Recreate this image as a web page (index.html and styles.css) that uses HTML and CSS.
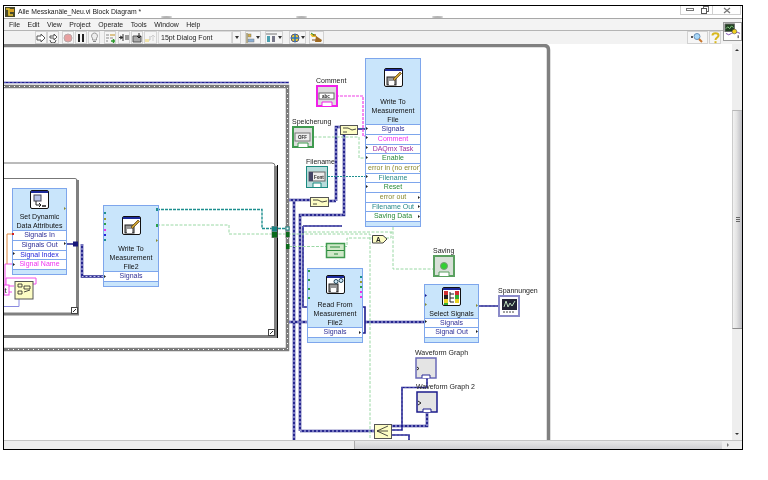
FILE: index.html
```html
<!DOCTYPE html>
<html lang="de">
<head>
<meta charset="utf-8">
<title>Alle Messkanäle_Neu.vi Block Diagram *</title>
<link rel="stylesheet" href="styles.css">
</head>
<body>
<div class="window">
  <header class="titlebar">
    <svg class="app-icon" width="10" height="10" viewBox="0 0 10 10"><rect width="10" height="10" fill="#4a4a2a"/><path d="M1 2h3v6h4" stroke="#f0c830" stroke-width="1.6" fill="none"/><path d="M5 2h4v3H5z" fill="#d8a020"/></svg>
    <span class="title-text">Alle Messkanäle_Neu.vi Block Diagram *</span>
    <span class="smudge s1"></span><span class="smudge s2"></span><span class="smudge s3"></span>
    <div class="win-btns">
      <span class="win-btn wb-min"><svg width="8" height="4"><rect x=".5" y=".5" width="7" height="2" fill="#fff" stroke="#777"/></svg></span>
      <span class="win-btn wb-max"><svg width="8" height="8"><rect x="2.5" y=".5" width="5" height="5" fill="none" stroke="#666"/><rect x=".5" y="2.5" width="5" height="5" fill="#fff" stroke="#555"/></svg></span>
      <span class="win-btn wb-close"><svg width="8" height="7"><path d="M1 1l6 5M7 1L1 6" stroke="#777" stroke-width="1.2"/></svg></span>
    </div>
  </header>
  <nav class="menubar">
    <span>File</span><span>Edit</span><span>View</span><span>Project</span><span>Operate</span><span>Tools</span><span>Window</span><span>Help</span>
  </nav>
  <div class="toolbar">
    <span class="tb"><svg width="10" height="10"><path d="M1 3h4V1l4 4-4 4V7H1z" fill="#fff" stroke="#555"/></svg></span>
    <span class="tb"><svg width="10" height="10"><path d="M2 3h4V1l3 3-3 3V5H2z" fill="#fff" stroke="#555"/><path d="M8 7a3 3 0 0 1-6 0" fill="none" stroke="#555"/></svg></span>
    <span class="tb m3"><svg width="10" height="10"><circle cx="5" cy="5" r="4" fill="#e8a0a0" stroke="#b8a8a8"/></svg></span>
    <span class="tb m1"><svg width="8" height="8"><path d="M1 0h2v8H1zM5 0h2v8H5z" fill="#222"/></svg></span>
    <span class="tb m1"><svg width="9" height="11"><path d="M4.5 1a3 3 0 0 1 2 5.2V8h-4V6.200a3 3 0 0 1 2-5.200z" fill="#eee" stroke="#999"/><path d="M3 9.500h3" stroke="#888"/></svg></span>
    <span class="tb m4"><svg width="11" height="10"><path d="M1 2h3M1 5h3M1 8h2" stroke="#888"/><path d="M5 2h5" stroke="#c09020"/><path d="M5 5h3" stroke="#888"/><path d="M6 8h5M8.500 6v4" stroke="#2a9a2a" stroke-width="1.500"/></svg></span>
    <span class="tb m2"><svg width="11" height="9"><path d="M4 1v7M0 4.500h4M1 3l3 1.500L1 6" stroke="#333" fill="none"/><path d="M6 2h5v5H6z" fill="#999"/></svg></span>
    <span class="tb m1"><svg width="11" height="10"><path d="M1 3h8v6H1z" fill="#aaa" stroke="#555"/><path d="M7 0v5M5 3l2 2 2-2" stroke="#222" fill="none"/></svg></span>
    <span class="tb tb-wide tb-off m1"><svg width="11" height="10"><path d="M0 7h5V3" stroke="#bbb" fill="none"/><path d="M8 8V2M6 4l2-2 2 2" stroke="#ccc" fill="none"/><rect y="6" width="4" height="3" fill="#f2e3a0"/></svg></span>
    <span class="font-select m1">15pt Dialog Font</span>
    <span class="tb tb-drop"><i class="caret"></i></span>
    <span class="tb tb-align m4"><svg width="9" height="10"><path d="M1 0v10" stroke="#7a6a2a"/><rect x="2" y="1" width="3" height="3" fill="#d8b040" stroke="#777" stroke-width=".5"/><rect x="2" y="6" width="6" height="3" fill="#8ab0d8" stroke="#777" stroke-width=".5"/></svg><i class="caret"></i></span>
    <span class="tb tb-dist m4"><svg width="11" height="10"><path d="M0 1h11" stroke="#777"/><rect x="1" y="3" width="3" height="6" fill="#4aa0b0"/><rect x="6" y="3" width="3" height="6" fill="#778"/></svg><i class="caret"></i></span>
    <span class="tb tb-reorder m6"><svg width="11" height="10"><circle cx="5" cy="5" r="4" fill="#e8c830" stroke="#557"/><path d="M5 1v8M1 5h8" stroke="#2a70c0" stroke-width="1.500"/></svg><i class="caret"></i></span>
    <span class="tb tb-clean m3"><svg width="14" height="11"><path d="M0 2h5l2 3h-5z" fill="#e8c030"/><path d="M3 3h3M2 8h8" stroke="#7a4a1a"/><path d="M6 4l6 4-1 2H5z" fill="#a06a20"/><path d="M1 1l3 2" stroke="#2a8a2a"/></svg></span>
    <span class="tb tb-search"><svg width="13" height="11"><path d="M0 5h2" stroke="#222" stroke-width="1.500"/><circle cx="6" cy="4.500" r="3" fill="#a8d8f8" stroke="#6a90b8"/><path d="M8 7l3 3" stroke="#c87830" stroke-width="2"/></svg></span>
    <span class="tb tb-help m1"><svg width="9" height="12"><path d="M1.500 3.500C1.500.5 7.500.5 7.500 3.500c0 2-3 2-3 4.500" fill="none" stroke="#d8b820" stroke-width="2"/><rect x="3.500" y="9.200" width="2" height="2" fill="#d8b820"/></svg></span>
  </div>
  <div class="vi-icon">
    <svg width="17" height="17" viewBox="0 0 18 18"><rect x="1" y="1" width="10" height="8" fill="#1f3f1f" stroke="#666"/><path d="M2 6l2-2 2 2 2-3 2 2" stroke="#8ad08a" fill="none"/><path d="M2 11q3 3 6 0t9 0" stroke="#7a4ab0" fill="none"/><circle cx="11" cy="9" r="2.500" fill="#f0d020" stroke="#333" stroke-width=".5"/><path d="M15 13v3" stroke="#222"/></svg>
  </div>
  <div class="workspace">
    <main class="canvas">
      <svg class="layer" width="728" height="396" viewBox="4 44 728 396">
        <defs>
          <path id="dyn-a" d="M82 244V276.500H103M294 200V440M289 200H310M300 431V215H344V134M300 431H374M336 201V127H340M328 201H336M289 322H307M365 322H424M391 426H427V413"/>
          <path id="dyn-b" d="M303 226V307H307M303 226H342M391 430H402V387.500H427V378M391 435H409V440M479 306H498M4 82.500H289"/>
        </defs>
        <!-- structure frames -->
        <path class="frame-main" d="M4 45.500H544q4.500 0 4.500 4.500V440"/>
        <path class="frame-dot" d="M4 86.500H287.500V349.500H4"/>
        <path class="frame-dot-mark" d="M4 86.500H287.500V349.500H4"/>
        <path class="frame-thin" d="M4 163H272q3 0 3 3"/>
        <path class="frame-mid" d="M275.500 166V336.500H4"/>
        <path class="frame-black" d="M277.500 165V338"/>
        <rect class="frame-corner" x="268.500" y="329.500" width="6" height="6"/>
        <path class="corner-mark" d="M270 334l3-3"/>
        <path class="frame-thin" d="M4 178.500H75q2 0 2 2"/>
        <path class="frame-mid" d="M77.500 180V314H4"/>
        <rect class="frame-corner" x="71.500" y="307.500" width="6" height="6"/>
        <path class="corner-mark" d="M73 312l3-3"/>
        <!-- signal wires -->
        <use href="#dyn-a" class="wire-dyn"/>
        <use href="#dyn-a" class="wire-dyn-mark"/>
        <use href="#dyn-b" class="wire-navy"/>
        <use href="#dyn-b" class="wire-navy-mark"/>
        <path class="wire-navy" d="M66 244H74M357 129H365M362 307H365V333H362"/>
        <path class="wire-teal" d="M157 209.500H262V228.500H287"/>
        <path class="wire-teal-dash" d="M328 176.500H365"/>
        <path class="wire-green" d="M157 225H229V234H370V438M289 246.500H326M344 246.500H347V238H372M386 238H391V232M304 232H393M393 227V269H433M314 137H359V158H365"/>
        <path class="wire-pink" d="M336 96H363V136H365"/>
        <path class="wire-pink-solid" d="M5 285V264H12M8 286H14M33 284H36V278H6V285M8 292H12"/>
        <path class="wire-orange" d="M7 264V234H12"/>
        <path class="wire-lav" d="M4 306.500H19V299"/>
        <!-- tunnels -->
        <rect class="tunnel-bg" x="271.500" y="226" width="6" height="12"/>
        <rect class="tunnel-bg" x="285.500" y="226" width="4" height="12"/>
        <rect class="t-teal" x="272" y="226.500" width="5" height="5"/>
        <rect class="t-green" x="272" y="232" width="5" height="5.500"/>
        <rect class="t-teal-open" x="286" y="227" width="3" height="3"/>
        <rect class="t-green" x="286" y="232" width="3.500" height="5"/>
        <rect class="t-green" x="286" y="244" width="3.500" height="5"/>
        <rect class="t-navy" x="73" y="241.500" width="5" height="5"/>
      </svg>

      <article class="node n-write-main">
        <div class="head">
          <svg class="vi" viewBox="0 0 19 19"><rect x=".5" y=".5" width="18" height="18" rx="1.500" fill="#fff" stroke="#111"/><rect x="1" y="1" width="17" height="2" fill="#1c2a9a"/><rect x="3" y="9" width="9" height="8" fill="#999" stroke="#222"/><rect x="5" y="13" width="5" height="4" fill="#fff"/><path d="M9 11l7-7 1.500 1.500-7 7z" fill="#c8a030" stroke="#5a3a10" stroke-width=".7"/></svg>
          <div class="name">Write To<br>Measurement<br>File</div>
        </div>
        <div class="row c-sig">Signals</div>
        <div class="row c-pink">Comment</div>
        <div class="row c-purple">DAQmx Task</div>
        <div class="row c-green">Enable</div>
        <div class="row c-olive clip">error in (no error)</div>
        <div class="row c-teal">Filename</div>
        <div class="row c-green">Reset</div>
        <div class="row c-olive">error out</div>
        <div class="row c-teal">Filename Out</div>
        <div class="row c-green">Saving Data</div>
        <div class="foot"></div>
      </article>

      <article class="node n-write2">
        <div class="head">
          <svg class="vi" viewBox="0 0 19 19"><rect x=".5" y=".5" width="18" height="18" rx="1.500" fill="#fff" stroke="#111"/><rect x="1" y="1" width="17" height="2" fill="#1c2a9a"/><rect x="3" y="9" width="9" height="8" fill="#999" stroke="#222"/><rect x="5" y="13" width="5" height="4" fill="#fff"/><path d="M9 11l7-7 1.500 1.500-7 7z" fill="#c8a030" stroke="#5a3a10" stroke-width=".7"/></svg>
          <div class="name">Write To<br>Measurement<br>File2</div>
        </div>
        <div class="row c-sig">Signals</div>
        <div class="foot"></div>
      </article>

      <article class="node n-setdyn">
        <div class="head">
          <svg class="vi" viewBox="0 0 19 19"><rect x=".5" y=".5" width="18" height="18" rx="1.500" fill="#fff" stroke="#111"/><rect x="1" y="1" width="17" height="2" fill="#1c2a9a"/><rect x="4" y="5" width="7" height="6" fill="#b8c4e8" stroke="#445"/><path d="M6 11v4h5M9 13l2 2-2 2" fill="none" stroke="#222"/><path d="M12 16h4" stroke="#555" stroke-width="2"/></svg>
          <div class="name">Set Dynamic<br>Data Attributes</div>
        </div>
        <div class="row c-sig">Signals In</div>
        <div class="row c-sig">Signals Out</div>
        <div class="row c-blue">Signal Index</div>
        <div class="row c-pink">Signal Name</div>
        <div class="foot"></div>
      </article>

      <article class="node n-read">
        <div class="head">
          <svg class="vi" viewBox="0 0 19 19"><rect x=".5" y=".5" width="18" height="18" rx="1.500" fill="#fff" stroke="#111"/><rect x="1" y="1" width="17" height="2" fill="#1c2a9a"/><rect x="3" y="9" width="9" height="8" fill="#999" stroke="#222"/><rect x="5" y="13" width="5" height="4" fill="#fff"/><circle cx="10" cy="6.500" r="2" fill="#cfe8f8" stroke="#245"/><circle cx="15" cy="5.500" r="2" fill="#cfe8f8" stroke="#245"/></svg>
          <div class="name">Read From<br>Measurement<br>File2</div>
        </div>
        <div class="row c-sig">Signals</div>
        <div class="foot"></div>
      </article>

      <article class="node n-select">
        <div class="head">
          <svg class="vi" viewBox="0 0 19 19"><rect x=".5" y=".5" width="18" height="18" rx="1.500" fill="#fff" stroke="#111"/><rect x="1" y="1" width="17" height="2" fill="#1c2a9a"/><path d="M2 4h4v4H2z" fill="#d03030"/><path d="M2 8h4v4H2z" fill="#222"/><path d="M2 12h4v4H2z" fill="#e8d020"/><path d="M2 16h4v2H2z" fill="#30b030"/><path d="M13 4h4v4h-4z" fill="#d03030"/><path d="M13 8h4v4h-4z" fill="#30b030"/><path d="M13 12h4v4h-4z" fill="#e8d020"/><path d="M8 5v10M8 7h4M8 11h4M8 15h4" stroke="#222" fill="none"/></svg>
          <div class="name">Select Signals</div>
        </div>
        <div class="row c-sig">Signals</div>
        <div class="row c-sig">Signal Out</div>
        <div class="foot"></div>
      </article>

      <figure class="term t-comment">
        <figcaption>Comment</figcaption>
        <svg class="ctl" viewBox="0 0 22 22"><rect x=".5" y=".5" width="21" height="21" fill="#fff" stroke="#f020e8"/><rect x="1.500" y="1.500" width="19" height="19" fill="#ddd" stroke="#f020e8"/><rect x="3" y="8" width="15" height="6" fill="#fff" stroke="#666"/><text class="ctl-text" x="6" y="13">abc</text><path d="M6 21v-4h10v4" fill="#fff" stroke="#f020e8"/></svg>
      </figure>
      <figure class="term t-speicher">
        <figcaption>Speicherung</figcaption>
        <svg class="ctl" viewBox="0 0 22 22"><rect x=".5" y=".5" width="21" height="21" fill="#fff" stroke="#3f9a4f"/><rect x="1.500" y="1.500" width="19" height="19" fill="#ddd" stroke="#3f9a4f"/><rect x="3" y="7" width="15" height="8" fill="#eee" stroke="#777"/><text class="ctl-text" x="6" y="13">OFF</text><path d="M6 21v-4h10v4" fill="#fff" stroke="#3f9a4f"/></svg>
      </figure>
      <figure class="term t-filename">
        <figcaption>Filename</figcaption>
        <svg class="ctl" viewBox="0 0 22 22"><rect x=".5" y=".5" width="21" height="21" fill="#b8dcdc" stroke="#1b8a80"/><rect x="3" y="6" width="16" height="9" fill="#eee" stroke="#666"/><rect x="3" y="6" width="4" height="9" fill="#446"/><text class="ctl-text" x="8" y="12.500">Font</text><path d="M7 21v-4h8v4" fill="#fff" stroke="#1b8a80"/></svg>
      </figure>
      <figure class="term t-saving">
        <figcaption>Saving</figcaption>
        <svg class="ctl" viewBox="0 0 22 22"><rect x="1" y="1" width="20" height="20" fill="#d8e0d8" stroke="#5aa060" stroke-width="2"/><circle cx="11" cy="11" r="3.500" fill="#30d030" stroke="#7a9a7a"/><path d="M6 21v-4h10v4" fill="#fff" stroke="#5aa060"/></svg>
      </figure>
      <figure class="term t-span">
        <figcaption>Spannungen</figcaption>
        <svg class="ctl" viewBox="0 0 22 22"><rect x="1" y="1" width="20" height="20" fill="#fff" stroke="#8a8ac8" stroke-width="2"/><rect x="4" y="4" width="15" height="11" fill="#223"/><path d="M6 12l2-6 2 6 2-4 2 3 3-5" stroke="#bdb" fill="none"/><path d="M5 17h12" stroke="#444" stroke-dasharray="2 1"/></svg>
      </figure>
      <figure class="term t-wave1">
        <figcaption>Waveform Graph</figcaption>
        <svg class="ctl" viewBox="0 0 22 22"><rect x="1" y="1" width="20" height="20" fill="#e4e4e4" stroke="#6a6ab8" stroke-width="1.500"/><path d="M7 21v-3h8v3" fill="#fff" stroke="#2a2a96"/><path d="M2 10l2 1.500-2 1.500" fill="none" stroke="#222"/></svg>
      </figure>
      <figure class="term t-wave2">
        <figcaption>Waveform Graph 2</figcaption>
        <svg class="ctl" viewBox="0 0 22 22"><rect x="1" y="1" width="20" height="20" fill="#e4e4e4" stroke="#1c1c8c" stroke-width="1.500"/><path d="M7 21v-3h8v3" fill="#fff" stroke="#1c1c8c"/><path d="M2 10l3 2-3 2" fill="none" stroke="#222"/></svg>
      </figure>

      <svg class="layer" width="728" height="396" viewBox="4 44 728 396">
        <!-- terminals on the express nodes -->
        <path class="dot-k" d="M366 127l2 1.500-2 1.500zM366 136l2 1.500-2 1.500zM366 146l2 1.500-2 1.500zM366 156l2 1.500-2 1.500zM366 175l2 1.500-2 1.500zM366 185l2 1.500-2 1.500zM418 196l2 1.500-2 1.500zM418 205l2 1.500-2 1.500zM418 215l2 1.500-2 1.500zM104 275l2 1.500-2 1.500zM64 242l2 1.500-2 1.500zM13 252l2 1.500-2 1.500zM13 263l2 1.500-2 1.500zM359 331l2 1.500-2 1.500zM425 320l2 1.500-2 1.500zM476 330l2 1.500-2 1.500z"/>
        <rect class="dot-r" x="12" y="233" width="2" height="2"/>
        <path class="dot-o" d="M64 207l2 1.500-2 1.500zM476 304l2 1.500-2 1.500zM425 303l2 1.500-2 1.500zM156 239l2 1.500-2 1.500z"/>
        <path class="dot-navy" d="M425 294l2 1.500-2 1.500z"/>
        <g>
          <rect class="d-teal" x="104" y="212" width="2" height="2"/><rect class="d-olive" x="104" y="218" width="2" height="2"/><rect class="d-green" x="104" y="223" width="2" height="2"/><rect class="d-pink" x="104" y="229" width="2" height="2"/><rect class="d-blue" x="104" y="234" width="2" height="2"/><rect class="d-teal" x="104" y="239" width="2" height="2"/>
          <rect class="d-teal" x="156" y="208" width="2" height="3"/><rect class="d-green" x="156" y="224" width="2" height="3"/>
          <rect class="d-green" x="308" y="270" width="2" height="2"/><rect class="d-green" x="308" y="279" width="2" height="2"/><rect class="d-green" x="308" y="288" width="2" height="2"/><rect class="d-green" x="308" y="297" width="2" height="2"/>
          <rect class="d-teal" x="360" y="276" width="2" height="2"/><rect class="d-olive" x="360" y="281" width="2" height="2"/><rect class="d-green" x="360" y="286" width="2" height="2"/><rect class="d-pink" x="360" y="291" width="2" height="2"/><rect class="d-pink" x="360" y="296" width="2" height="2"/>
        </g>
        <!-- merge and select primitives -->
        <g class="prim">
          <rect x="340.500" y="125.500" width="17" height="9"/><path d="M343 128l5 0 4 2 4-1M343 132l4 0"/>
          <rect x="310.500" y="197.500" width="18" height="9"/><path d="M313 200l5 0 4 2 5-1M313 204l4 0"/>
          <rect x="374.500" y="424.500" width="17" height="14"/><path d="M377 431l11-5M377 431l11 0M377 431l11 5"/>
          <rect x="15" y="281.500" width="18" height="17.500"/><path d="M18 284h4v3h-4zM24 286h6v3h-6zM18 291h4v3h-4zM24 292l6-2"/>
        </g>
        <rect class="pink-const" x="4" y="285" width="5" height="10"/>
        <text class="pink-t" x="4.500" y="293">t</text>
        <path class="a-node" d="M372.500 235.500H383L387 239L383 243H372.500z"/>
        <text class="a-text" x="376" y="241.500">A</text>
        <g class="const-g">
          <rect x="326.500" y="243.500" width="18" height="14"/>
          <path d="M327 250.500H344M330 247h10M334 254h4"/>
        </g>
      </svg>
    </main>
    <aside class="vscroll">
      <span class="arrow-up"></span>
      <span class="v-thumb"><i></i><i></i><i></i></span>
      <span class="arrow-down"></span>
    </aside>
  </div>
  <footer class="hscroll">
    <span class="h-track"></span>
    <span class="h-thumb"></span>
    <span class="h-end"><i class="arrow-right"></i></span>
  </footer>
</div>
</body>
</html>
```
FILE: styles.css
```css
* { box-sizing: border-box; }
html, body { margin: 0; padding: 0; background: #fff; }
body { width: 768px; height: 480px; overflow: hidden; font-family: "Liberation Sans", Arial, sans-serif; color: #222; }

.window {
  position: relative;
  margin: 5px 0 0 3px;
  width: 740px;
  height: 445px;
  border: 1px solid #000;
  display: flex;
  flex-direction: column;
  filter: blur(.3px);
}

.titlebar {
  position: relative;
  height: 13px;
  flex: none;
  display: flex;
  align-items: center;
  gap: 3px;
  padding-left: 1px;
  background: #fff;
  border-bottom: 1px solid #a8a8a8;
}
.app-icon { flex: none; }
.title-text { font-size: 6.800px; color: #222; line-height: 12px; }
.smudge { position: absolute; top: 10px; width: 11px; height: 2px; background: #b4b4b4; border-radius: 50%; }
.s1 { left: 157px; }
.s2 { left: 292px; }
.s3 { left: 428px; }
.win-btns { position: absolute; right: 1px; top: 0; display: flex; height: 9px; border: 1px solid #cfcfcf; border-top: 0; }
.win-btn { display: flex; align-items: center; justify-content: center; }
.wb-min { width: 17px; }
.wb-max { width: 15px; border-right: 1px solid #cfcfcf; }
.wb-close { width: 27px; }

.menubar {
  height: 12px;
  flex: none;
  display: flex;
  gap: 7.500px;
  align-items: center;
  padding-left: 5px;
  font-size: 6.900px;
  background: #f3f3f3;
  border-bottom: 1px solid #b4b4b4;
  color: #222;
}

.toolbar {
  height: 13px;
  flex: none;
  display: flex;
  align-items: flex-start;
  padding: 0 21px 0 31px;
  background: #f2f2f2;
}
.tb {
  width: 12px;
  height: 13px;
  flex: none;
  display: flex;
  align-items: center;
  justify-content: center;
  gap: 1px;
  border: 1px solid #d2d2d2;
  background: #f6f6f6;
}
.tb-off { opacity: .9; }
.tb-wide { width: 13px; }
.tb-drop { width: 9px; }
.tb-align { width: 16px; }
.tb-dist { width: 18px; }
.tb-reorder { width: 17px; }
.tb-clean { width: 15px; }
.tb-search { width: 21px; margin-left: auto; }
.tb-help { width: 12px; }
.m1 { margin-left: 1px; }
.m2 { margin-left: 2px; }
.m3 { margin-left: 3px; }
.m4 { margin-left: 4px; }
.m6 { margin-left: 6px; }
.caret { width: 0; height: 0; border: 2px solid transparent; border-top: 3px solid #333; border-bottom: 0; flex: none; }
.font-select {
  width: 74px;
  height: 13px;
  flex: none;
  display: flex;
  align-items: center;
  padding-left: 2px;
  font-size: 7px;
  color: #222;
  background: #f6f6f6;
  border: 1px solid #dadada;
}

.vi-icon {
  position: absolute;
  right: 0;
  top: 16px;
  width: 19px;
  height: 19px;
  background: #fff;
  border: 1px solid #999;
  line-height: 0;
}

.workspace { flex: 1; min-height: 0; display: flex; }
.canvas { position: relative; flex: 1; min-width: 0; overflow: hidden; background: #fff; }
.layer { position: absolute; left: 0; top: 0; pointer-events: none; fill: none; }

/* structure frames */
.frame-main { stroke: #808080; stroke-width: 3.500; fill: none; }
.frame-dot { stroke: #7c7c7c; stroke-width: 3.500; fill: none; }
.frame-dot-mark { stroke: #fff; stroke-width: 1; stroke-dasharray: 1 4; fill: none; }
.frame-thin { stroke: #777; stroke-width: 1; fill: none; }
.frame-mid { stroke: #808080; stroke-width: 3; fill: none; }
.frame-black { stroke: #000; stroke-width: 1; fill: none; }
.frame-corner { fill: #fff; stroke: #444; }
.corner-mark { stroke: #333; fill: none; }

/* wires */
.wire-dyn { stroke: #27278f; stroke-width: 2.600; fill: none; }
.wire-dyn-mark { stroke: #c8c8f2; stroke-width: 1; stroke-dasharray: 2 2; fill: none; }
.wire-navy { stroke: #1c1c8c; stroke-width: 1.600; fill: none; }
.wire-navy-mark { stroke: #8f8fdc; stroke-width: .5; stroke-dasharray: 2 2; fill: none; }
.wire-teal { stroke: #1f8f8f; stroke-width: 1.400; stroke-dasharray: 3 1; fill: none; }
.wire-teal-dash { stroke: #1f8f8f; stroke-width: 1.200; stroke-dasharray: 2 1; fill: none; }
.wire-green { stroke: #9ad8a4; stroke-width: 1; stroke-dasharray: 3 1.500; fill: none; }
.wire-pink { stroke: #ef3fe6; stroke-width: 1.200; stroke-dasharray: 3 1; fill: none; }
.wire-pink-solid { stroke: #f050e8; stroke-width: 1; fill: none; }
.wire-orange { stroke: #e08a40; stroke-width: 1; fill: none; }
.wire-lav { stroke: #8a8ae0; stroke-width: 1; fill: none; }
.tunnel-bg { fill: #8a8a8a; }
.t-teal { fill: #178080; }
.t-green { fill: #0a6a1a; }
.t-teal-open { fill: #fff; stroke: #178080; }
.t-navy { fill: #17177a; }

/* express VI nodes */
.node {
  position: absolute;
  display: flex;
  flex-direction: column;
  border: 1px solid #7ea6ec;
  background: #c9e5fb;
}
.n-write-main { left: 361px; top: 14px; width: 56px; height: 169px; }
.n-write2 { left: 99px; top: 161px; width: 56px; height: 82px; }
.n-setdyn { left: 8px; top: 144px; width: 55px; height: 87px; }
.n-read { left: 303px; top: 224px; width: 56px; height: 75px; }
.n-select { left: 420px; top: 240px; width: 55px; height: 59px; }
.head { flex: 1; min-height: 0; display: flex; flex-direction: column; align-items: center; }
.n-write-main .head { padding-top: 9px; }
.n-write2 .head { padding-top: 10px; }
.n-setdyn .head { padding-top: 1px; }
.n-read .head { padding-top: 6px; }
.n-select .head { padding-top: 2px; }
.vi { width: 19px; height: 19px; flex: none; margin-bottom: auto; }
.name { font-size: 7px; line-height: 9px; text-align: center; color: #111; white-space: nowrap; }
.row {
  height: 9.700px;
  flex: none;
  border-top: 1px solid #7ea6ec;
  background: #fff;
  font-size: 7px;
  line-height: 8.700px;
  text-align: center;
  white-space: nowrap;
  overflow: hidden;
}
.clip { text-align: left; padding-left: 2px; }
.foot { height: 5px; flex: none; border-top: 1px solid #7ea6ec; }
.c-sig { color: #2f2f96; }
.c-blue { color: #2424d8; }
.c-pink { color: #f030f0; }
.c-purple { color: #a030a0; }
.c-green { color: #2a8a3a; }
.c-olive { color: #8a8a30; }
.c-teal { color: #2a8a8a; }

/* front-panel terminals */
.term {
  position: absolute;
  margin: 0;
  display: flex;
  flex-direction: column;
  align-items: flex-start;
  width: max-content;
}
.term figcaption { font-size: 7px; line-height: 8px; color: #222; white-space: nowrap; }
.ctl { width: 22px; height: 22px; display: block; }
.ctl-text { font: 700 4.500px "Liberation Sans", sans-serif; fill: #222; }
.t-comment { left: 312px; top: 33px; }
.t-speicher { left: 288px; top: 74px; }
.t-filename { left: 302px; top: 114px; }
.t-saving { left: 429px; top: 203px; }
.t-span { left: 494px; top: 243px; }
.t-wave1 { left: 411px; top: 305px; }
.t-wave2 { left: 412px; top: 339px; }

/* terminal marks */
.dot-k { fill: #222; }
.dot-r { fill: #d02020; }
.dot-o { fill: #8a8a30; }
.dot-navy { fill: #1c1c8c; }
.d-teal { fill: #1f8f8f; }
.d-olive { fill: #9a9a30; }
.d-green { fill: #2aa04a; }
.d-pink { fill: #ef30e8; }
.d-blue { fill: #2424d8; }
.prim rect { fill: #fdfdc4; stroke: #555; }
.prim path { stroke: #222; fill: none; stroke-width: .8; }
.a-node { fill: #fdfdc4; stroke: #444; }
.pink-const { fill: #fff; stroke: #f040e8; }
.pink-t { font: 8px "Liberation Sans", sans-serif; fill: #222; }
.a-text { font: 700 6.500px "Liberation Sans", sans-serif; fill: #222; }
.const-g rect { fill: #cfe8c8; stroke: #3f9a4f; stroke-width: 1.500; }
.const-g path { stroke: #2a8a3a; fill: none; }

/* scrollbars */
.vscroll {
  width: 10px;
  flex: none;
  position: relative;
  background: #eeeeee;
  display: flex;
  flex-direction: column;
  align-items: stretch;
}
.v-thumb {
  position: absolute;
  left: 0;
  right: 0;
  top: 66px;
  height: 219px;
  display: flex;
  flex-direction: column;
  align-items: center;
  justify-content: center;
  gap: 1px;
  background: linear-gradient(to right, #f2f2f2, #e4e4e4 40%, #bdbdc2);
  border-top: 1px solid #b8b8b8;
  border-bottom: 1px solid #8e8e8e;
  border-left: 1px solid #ccc;
}
.v-thumb i { width: 4px; height: 1px; background: #666; }
.arrow-up { position: absolute; left: 3px; top: 5px; border: 2px solid transparent; border-bottom: 2px solid #333; border-top: 0; }
.arrow-down { position: absolute; left: 3px; bottom: 5px; border: 2px solid transparent; border-top: 2px solid #333; border-bottom: 0; }
.hscroll {
  height: 9px;
  flex: none;
  display: flex;
  background: #eee;
  border-top: 1px solid #c4c4c4;
}
.h-track { width: 351px; flex: none; background: #eeeeee; border-right: 1px solid #aaa; }
.h-thumb { width: 367px; flex: none; background: linear-gradient(to bottom, #e8e8e8, #cfcfd2); }
.h-end { flex: 1; position: relative; }
.arrow-right { position: absolute; left: 5px; top: 2px; border: 2px solid transparent; border-left: 2px solid #777; border-right: 0; }
```
